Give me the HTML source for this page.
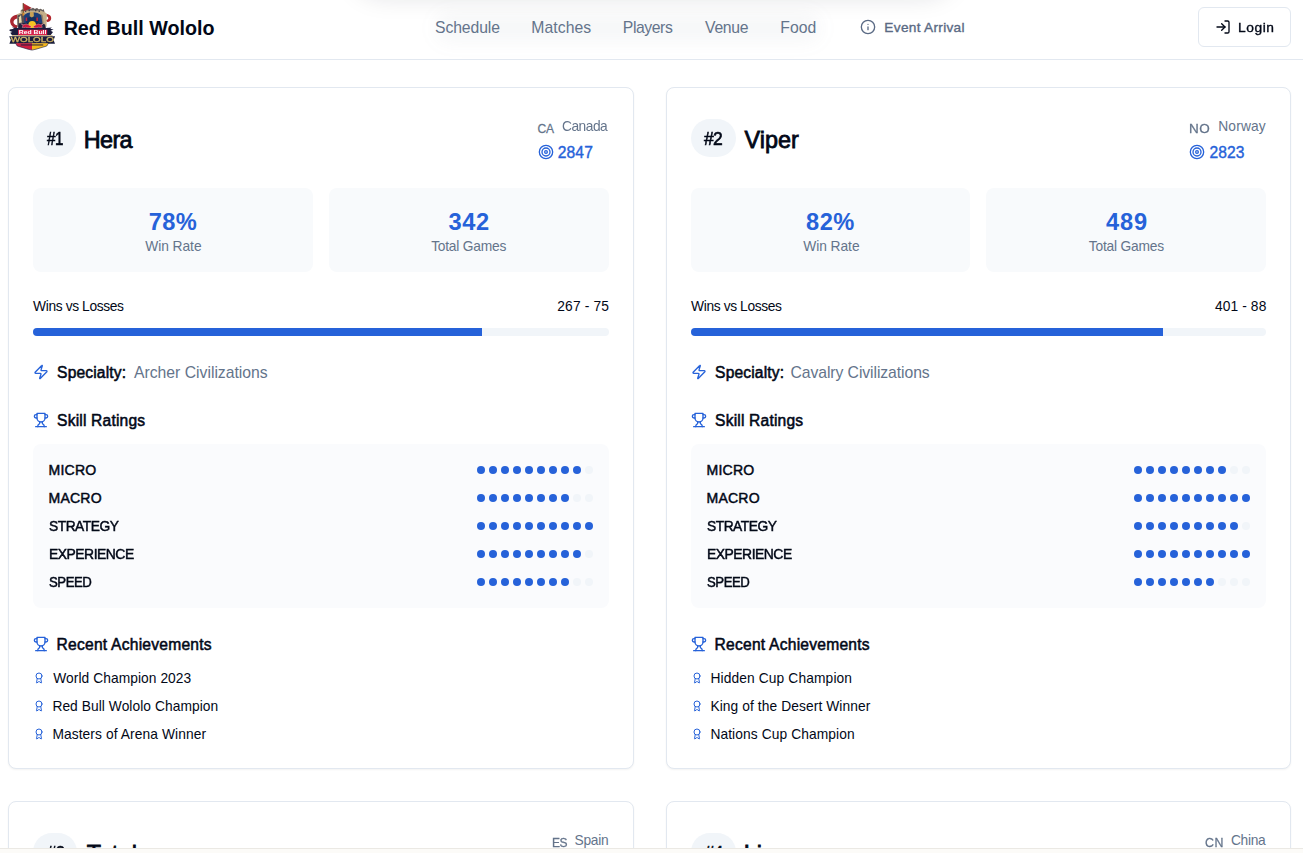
<!DOCTYPE html><html lang="en"><head><meta charset="utf-8"><title>Red Bull Wololo - Players</title><style>
*{box-sizing:border-box}
html,body{margin:0;padding:0}
body{width:1303px;height:853px;overflow:hidden;position:relative;background:#fff;font-family:"Liberation Sans",Arial,sans-serif;color:#020817}
.t{position:absolute;white-space:pre;line-height:normal;transform-origin:0 50%}
.b,.ic,.dots,.card{position:absolute}
.ic{display:block}
.logo{position:absolute;left:0;top:0;display:block}
header{position:absolute;left:0;top:0;width:1303px;height:60px;border-bottom:1px solid #e2e8f0;background:#fff}
.glow{position:absolute;left:362px;top:-52px;width:584px;height:40px;border-radius:20px;box-shadow:0 0 26px 8px rgba(15,23,42,.13)}
.navglow{position:absolute;left:436px;top:14px;width:384px;height:28px;border-radius:14px;background:rgba(100,116,139,.06);filter:blur(9px)}
.login{position:absolute;left:1198px;top:7px;width:93px;height:40px;border:1px solid #e2e8f0;border-radius:6px;background:#fff}
.card{border:1px solid #e2e8f0;border-radius:8px;background:#fff;box-shadow:0 1px 2px rgba(0,0,0,.05);box-sizing:content-box}
.bar{background:#f1f5f9;border-radius:4px;overflow:hidden}
.dots{display:flex;gap:4px}
.d{display:block;width:8px;height:8px;border-radius:50%;background:#f1f5f9}
.d.on{background:#2662d9}
.strip{position:absolute;left:0;top:848px;width:1303px;height:5px;background:#fcfbf8;border-top:1px solid #ebe9e4}
</style></head><body>
<header><div class="glow"></div><div class="navglow"></div>
<svg class="logo" width="64" height="56" viewBox="0 0 64 56" role="img" aria-label="Red Bull Wololo logo">
<defs>
<linearGradient id="lgFlag" x1="0" y1="0" x2="1" y2="1"><stop offset="0" stop-color="#cf323c"/><stop offset="1" stop-color="#8a1820"/></linearGradient>
<linearGradient id="lgGold" x1="0" y1="0" x2="0" y2="1"><stop offset="0" stop-color="#f6e8ac"/><stop offset=".5" stop-color="#cfae55"/><stop offset="1" stop-color="#8f7430"/></linearGradient>
<filter id="lgSoft" x="-10%" y="-10%" width="120%" height="120%"><feGaussianBlur stdDeviation=".32"/></filter>
</defs>
<g filter="url(#lgSoft)">
<!-- ribbons -->
<path d="M18.400 14.500C12.800 14.600 9.600 18.200 10.200 22.300c.5 3.300 2.800 5.600 6.500 6.100l1.100-3.200c-2.500.2-4.100-1-4.300-2.900-.2-2.100 1.500-3.800 4.700-3.900z" fill="#a92630"/>
<path d="M45.600 13.800c3.600.2 5.800 2.100 5.600 4.600-.2 2.100-1.700 3.400-4 3.500l-1.500-1.700c1.700-.2 2.600-.9 2.600-2.100s-1.100-2-3-2.200z" fill="#b3262e"/>
<!-- castle / tan shield -->
<path d="M20.600 12.800v-2.600l1.600-.9 1.500.9 1.400-1.400 2 .8 1.700-1.500 2.100 1 2-1.400 2 1.300 2.100-1 1.800 1.400 2-.7 1.500 1.300 1.500-.7.800 2.800 2.300 1.700-.4 12.900H17.400l-.4-12.400z" fill="#c4ae88"/>
<path d="M20.600 11.400l1.600-2.100 1.500.9 1.400-1.400 2 .8 1.700-1.500 2.100 1 2-1.400 2 1.300 2.100-1 1.800 1.400 2-.7 1.500 1.300 1.500-.7.500 2.600-3.700-1.400H24.500z" fill="#3b3a4c" opacity=".7"/>
<path d="M17.400 15.500l6.600-2.500 1 10.500-2.500 4H17.600z" fill="#2b2a3f" opacity=".72"/>
<path d="M40.400 13.400l2.400 1.800.8 8-2.600 1z" fill="#7d6a55" opacity=".6"/>
<path d="M25 10.400h1.300v1.500H25zM28.600 9.800h1.300v1.500h-1.300zM35 9.800h1.300v1.500H35zM38.600 10.400h1.300v1.500h-1.300z" fill="#2b2a3f" opacity=".8"/>
<!-- flag -->
<path d="M22.900 2.900 31.800 7.900 23.800 11.200z" fill="url(#lgFlag)"/>
<rect x="22.700" y="3.200" width="1" height="12" fill="#5e4326"/>
<!-- blue centre -->
<path d="M24 15.200c1.800-2 4.600-3 8.300-3 3.800 0 6.900 1 8.900 3l1.200 7.800H24.200z" fill="#1f3d77"/>
<path d="M26.500 18.500c1.600-1.200 3.400-1.800 5.700-1.800 2.400 0 4.400.6 6 1.800l.6 4.500H26.200z" fill="#172f5c"/>
<path d="M30 12h3.600l.3 4.200-2.100 1.200-2.100-1.200z" fill="#c9a257"/>
<path d="M19 17.200l2-2.200.8 7.400-2.900.6z" fill="#e8d9a8"/>
<path d="M22.600 12.800l1.800.2-.2 2.400-1.800.4z" fill="#d98a2b"/>
<rect x="25.700" y="17.600" width="1.500" height="3.400" fill="#c8283a"/><rect x="36.400" y="17.600" width="1.500" height="3.400" fill="#c8283a"/>
<!-- navy behind bulls -->
<path d="M19 24.500l3-1.500h19.600l3.400 1.500 1 4H18z" fill="#20223f"/>
<!-- sun and bulls -->
<circle cx="32.200" cy="24.800" r="3.800" fill="#f6c320"/>
<path d="M21.200 23.700l2.600 1 2.400-.7 2.500.9 2.500 1.400-.5 1.500-2.700.1-2.300-.6-2.400.5-1.300-.6 1.100-1.300z" fill="#d0173c" stroke="#f3dfe3" stroke-width=".35"/>
<path d="M43.300 23.700l-2.600 1-2.400-.7-2.500.9-2.500 1.400.5 1.500 2.700.1 2.300-.6 2.400.5 1.300-.6-1.100-1.300z" fill="#d0173c" stroke="#f3dfe3" stroke-width=".35"/>
<!-- navy spiky band -->
<path d="M9.800 29.400l4.200-.6-2-1.200 6.400.4h27.600l6-.6-1.800 1.400 3.400.7-3 1.300 2.400 1.200-2.600 3.400H12.200l-2-2.600 2.200-.9-3-1.100z" fill="#1c1f3d"/>
<!-- tan band -->
<path d="M11.600 35.100h41.200l-.8 1.400H12.600z" fill="#cdb88f"/>
<rect x="18" y="29.700" width="29.200" height="5.400" fill="#d6224d"/>
<text x="32.600" y="34.300" text-anchor="middle" font-family="Liberation Sans, Arial, sans-serif" font-weight="700" font-size="5.400" textLength="27.600" lengthAdjust="spacingAndGlyphs" fill="#ffffff">Red Bull</text>
<!-- wololo plate -->
<path d="M9.200 36.200h45.900l-1.500 3.700 1.400 3.800H9.400l1.400-3.800z" fill="#1c1f3d"/>
<text x="32.300" y="42.300" text-anchor="middle" font-family="Liberation Sans, Arial, sans-serif" font-weight="400" font-size="7.200" textLength="43" lengthAdjust="spacingAndGlyphs" fill="url(#lgGold)" stroke="#d9bd68" stroke-width=".28">WOLOLO</text>
<!-- bottom red / yellow -->
<path d="M15.600 43.200h16.400v6.900l-4-0.900-10.800-3.200z" fill="#cf1b40"/>
<path d="M32 43.200h16.400l-1.600 2.800-10.800 3.200-4 0.900z" fill="#f4b81c"/>
<path d="M15.600 43.200l1.600 2.800 10.800 3.200 4 .9 4-.9 10.800-3.200 1.600-2.800" fill="none" stroke="#1c1f3d" stroke-width=".6"/>
<rect x="20.800" y="44.300" width="22.400" height="1.300" fill="#2a2440" opacity=".8"/>
</g>
</svg>

<nav><span class="t" style="left:435.09px;top:19.00px;font-size:15.76px;color:#64748b;letter-spacing:-0.117px;">Schedule</span><span class="t" style="left:531.24px;top:19.00px;font-size:15.76px;color:#64748b;letter-spacing:0.078px;">Matches</span><span class="t" style="left:622.84px;top:19.00px;font-size:15.76px;color:#64748b;letter-spacing:-0.422px;">Players</span><span class="t" style="left:705.08px;top:19.00px;font-size:15.76px;color:#64748b;letter-spacing:-0.304px;">Venue</span><span class="t" style="left:780.24px;top:19.00px;font-size:15.76px;color:#64748b;letter-spacing:0.049px;">Food</span></nav>
<span class="t" style="left:63.64px;top:17.00px;font-size:19.7px;color:#020817;font-weight:700;letter-spacing:0.027px;">Red Bull Wololo</span>
<svg class="ic" style="left:860px;top:19px" width="16" height="16" viewBox="0 0 24 24" fill="none" stroke="#5a6a84" stroke-width="2" stroke-linecap="round" stroke-linejoin="round"><circle cx="12" cy="12" r="10"/><path d="M12 16v-4"/><path d="M12 8h.01"/></svg>
<span class="t" style="left:884.37px;top:20.20px;font-size:13.65px;color:#5a6a84;-webkit-text-stroke:0.36px currentColor;letter-spacing:0.301px;">Event Arrival</span>
<div class="login"></div>
<svg class="ic" style="left:1215px;top:19px" width="16" height="16" viewBox="0 0 24 24" fill="none" stroke="#020817" stroke-width="2" stroke-linecap="round" stroke-linejoin="round"><path d="M15 3h4a2 2 0 0 1 2 2v14a2 2 0 0 1-2 2h-4"/><polyline points="10 17 15 12 10 7"/><line x1="15" x2="3" y1="12" y2="12"/></svg>
<span class="t" style="left:1238.16px;top:20.10px;font-size:13.65px;color:#020817;-webkit-text-stroke:0.36px currentColor;letter-spacing:0.546px;transform:scaleX(1.0098);">Login</span>
</header><main>
<article class="player">
<div class="card" style="left:8px;top:87px;width:624px;height:680px"></div>
<div class="b" style="left:33px;top:119px;width:43px;height:38px;background:#f1f5f9;border-radius:19px"></div>
<div class="b" style="left:33px;top:188px;width:280px;height:84px;background:#f8fafc;border-radius:8px"></div>
<div class="b" style="left:329px;top:188px;width:280px;height:84px;background:#f8fafc;border-radius:8px"></div>
<div class="b bar" style="left:33px;top:328px;width:576px;height:8px"><div style="width:78%;height:8px;background:#2662d9"></div></div>
<div class="b" style="left:33px;top:444px;width:576px;height:164px;background:#fafbfd;border-radius:8px"></div>
<svg class="ic" style="left:538px;top:144px" width="16" height="16" viewBox="0 0 24 24" fill="none" stroke="#2662d9" stroke-width="2" stroke-linecap="round" stroke-linejoin="round"><circle cx="12" cy="12" r="10"/><circle cx="12" cy="12" r="6"/><circle cx="12" cy="12" r="2"/></svg>
<svg class="ic" style="left:33px;top:364px" width="16" height="16" viewBox="0 0 24 24" fill="none" stroke="#2662d9" stroke-width="2" stroke-linecap="round" stroke-linejoin="round"><path d="M4 14a1 1 0 0 1-.78-1.63l9.9-10.2a.5.5 0 0 1 .86.46l-1.92 6.02A1 1 0 0 0 13 10h7a1 1 0 0 1 .78 1.63l-9.9 10.2a.5.5 0 0 1-.86-.46l1.92-6.02A1 1 0 0 0 11 14z"/></svg>
<svg class="ic" style="left:33px;top:412px" width="16" height="16" viewBox="0 0 24 24" fill="none" stroke="#2662d9" stroke-width="2" stroke-linecap="round" stroke-linejoin="round"><path d="M6 9H4.5a2.5 2.5 0 0 1 0-5H6"/><path d="M18 9h1.5a2.5 2.5 0 0 0 0-5H18"/><path d="M4 22h16"/><path d="M10 14.66V17c0 .55-.47.98-.97 1.21C7.85 18.75 7 20.24 7 22"/><path d="M14 14.66V17c0 .55.47.98.97 1.21C16.15 18.75 17 20.24 17 22"/><path d="M18 2H6v7a6 6 0 0 0 12 0V2Z"/></svg>
<svg class="ic" style="left:33px;top:636px" width="16" height="16" viewBox="0 0 24 24" fill="none" stroke="#2662d9" stroke-width="2" stroke-linecap="round" stroke-linejoin="round"><path d="M6 9H4.5a2.5 2.5 0 0 1 0-5H6"/><path d="M18 9h1.5a2.5 2.5 0 0 0 0-5H18"/><path d="M4 22h16"/><path d="M10 14.66V17c0 .55-.47.98-.97 1.21C7.85 18.75 7 20.24 7 22"/><path d="M14 14.66V17c0 .55.47.98.97 1.21C16.15 18.75 17 20.24 17 22"/><path d="M18 2H6v7a6 6 0 0 0 12 0V2Z"/></svg>
<svg class="ic" style="left:33px;top:672px" width="12" height="12" viewBox="0 0 24 24" fill="none" stroke="#2662d9" stroke-width="2" stroke-linecap="round" stroke-linejoin="round"><path d="m15.477 12.89 1.515 8.526a.5.5 0 0 1-.81.47l-3.58-2.687a1 1 0 0 0-1.197 0l-3.586 2.686a.5.5 0 0 1-.81-.469l1.514-8.526"/><circle cx="12" cy="8" r="6"/></svg>
<svg class="ic" style="left:33px;top:700px" width="12" height="12" viewBox="0 0 24 24" fill="none" stroke="#2662d9" stroke-width="2" stroke-linecap="round" stroke-linejoin="round"><path d="m15.477 12.89 1.515 8.526a.5.5 0 0 1-.81.47l-3.58-2.687a1 1 0 0 0-1.197 0l-3.586 2.686a.5.5 0 0 1-.81-.469l1.514-8.526"/><circle cx="12" cy="8" r="6"/></svg>
<svg class="ic" style="left:33px;top:728px" width="12" height="12" viewBox="0 0 24 24" fill="none" stroke="#2662d9" stroke-width="2" stroke-linecap="round" stroke-linejoin="round"><path d="m15.477 12.89 1.515 8.526a.5.5 0 0 1-.81.47l-3.58-2.687a1 1 0 0 0-1.197 0l-3.586 2.686a.5.5 0 0 1-.81-.469l1.514-8.526"/><circle cx="12" cy="8" r="6"/></svg>
<div class="dots" style="left:477px;top:466px"><i class="d on"></i><i class="d on"></i><i class="d on"></i><i class="d on"></i><i class="d on"></i><i class="d on"></i><i class="d on"></i><i class="d on"></i><i class="d on"></i><i class="d"></i></div><div class="dots" style="left:477px;top:494px"><i class="d on"></i><i class="d on"></i><i class="d on"></i><i class="d on"></i><i class="d on"></i><i class="d on"></i><i class="d on"></i><i class="d on"></i><i class="d"></i><i class="d"></i></div><div class="dots" style="left:477px;top:522px"><i class="d on"></i><i class="d on"></i><i class="d on"></i><i class="d on"></i><i class="d on"></i><i class="d on"></i><i class="d on"></i><i class="d on"></i><i class="d on"></i><i class="d on"></i></div><div class="dots" style="left:477px;top:550px"><i class="d on"></i><i class="d on"></i><i class="d on"></i><i class="d on"></i><i class="d on"></i><i class="d on"></i><i class="d on"></i><i class="d on"></i><i class="d on"></i><i class="d"></i></div><div class="dots" style="left:477px;top:578px"><i class="d on"></i><i class="d on"></i><i class="d on"></i><i class="d on"></i><i class="d on"></i><i class="d on"></i><i class="d on"></i><i class="d on"></i><i class="d"></i><i class="d"></i></div>
<span class="t" style="left:46.72px;top:128.70px;font-size:17.55px;color:#020817;-webkit-text-stroke:0.59px currentColor;letter-spacing:-0.614px;transform:scaleX(0.8660);">#1</span>
<span class="t" style="left:83.69px;top:126.90px;font-size:23.4px;color:#020817;-webkit-text-stroke:0.79px currentColor;letter-spacing:-0.600px;">Hera</span>
<span class="t" style="left:537.46px;top:121.80px;font-size:12.06px;color:#64748b;-webkit-text-stroke:0.26px currentColor;letter-spacing:-0.108px;">CA</span>
<span class="t" style="left:562.07px;top:118.80px;font-size:13.79px;color:#64748b;letter-spacing:-0.483px;transform:scaleX(0.9976);">Canada</span>
<span class="t" style="left:557.63px;top:144.00px;font-size:15.6px;color:#2662d9;-webkit-text-stroke:0.38px currentColor;letter-spacing:0.173px;">2847</span>
<span class="t" style="left:148.75px;top:208.50px;font-size:23.64px;color:#2662d9;font-weight:700;letter-spacing:0.375px;">78%</span>
<span class="t" style="left:145.21px;top:239.20px;font-size:13.79px;color:#64748b;letter-spacing:-0.048px;">Win Rate</span>
<span class="t" style="left:448.38px;top:208.50px;font-size:23.64px;color:#2662d9;font-weight:700;letter-spacing:0.704px;">342</span>
<span class="t" style="left:431.14px;top:239.20px;font-size:13.79px;color:#64748b;letter-spacing:-0.215px;">Total Games</span>
<span class="t" style="left:33.11px;top:298.50px;font-size:13.79px;color:#020817;letter-spacing:-0.381px;">Wins vs Losses</span>
<span class="t" style="left:557.31px;top:298.50px;font-size:13.79px;color:#020817;letter-spacing:0.147px;">267 - 75</span>
<span class="t" style="left:57.11px;top:363.80px;font-size:15.6px;color:#020817;-webkit-text-stroke:0.53px currentColor;letter-spacing:0.148px;">Specialty:</span>
<span class="t" style="left:134.01px;top:363.80px;font-size:15.76px;color:#64748b;letter-spacing:-0.011px;">Archer Civilizations</span>
<span class="t" style="left:57.11px;top:411.60px;font-size:15.6px;color:#020817;-webkit-text-stroke:0.53px currentColor;letter-spacing:0.177px;">Skill Ratings</span>
<span class="t" style="left:48.57px;top:461.70px;font-size:14.07px;color:#020817;-webkit-text-stroke:0.46px currentColor;letter-spacing:0.196px;">MICRO</span>
<span class="t" style="left:48.57px;top:489.70px;font-size:14.07px;color:#020817;-webkit-text-stroke:0.46px currentColor;letter-spacing:0.173px;">MACRO</span>
<span class="t" style="left:49.15px;top:517.70px;font-size:14.07px;color:#020817;-webkit-text-stroke:0.46px currentColor;letter-spacing:-0.492px;transform:scaleX(0.9797);">STRATEGY</span>
<span class="t" style="left:48.58px;top:545.70px;font-size:14.07px;color:#020817;-webkit-text-stroke:0.46px currentColor;letter-spacing:-0.492px;transform:scaleX(0.9878);">EXPERIENCE</span>
<span class="t" style="left:49.17px;top:573.70px;font-size:14.07px;color:#020817;-webkit-text-stroke:0.46px currentColor;letter-spacing:-0.492px;transform:scaleX(0.9378);">SPEED</span>
<span class="t" style="left:56.54px;top:636.00px;font-size:15.6px;color:#020817;-webkit-text-stroke:0.53px currentColor;letter-spacing:0.238px;">Recent Achievements</span>
<span class="t" style="left:53.31px;top:670.90px;font-size:13.79px;color:#020817;letter-spacing:0.059px;">World Champion 2023</span>
<span class="t" style="left:52.38px;top:698.90px;font-size:13.79px;color:#020817;letter-spacing:0.058px;">Red Bull Wololo Champion</span>
<span class="t" style="left:52.38px;top:726.90px;font-size:13.79px;color:#020817;letter-spacing:0.090px;">Masters of Arena Winner</span>
</article>
<article class="player">
<div class="card" style="left:666px;top:87px;width:623px;height:680px"></div>
<div class="b" style="left:691px;top:119px;width:45px;height:38px;background:#f1f5f9;border-radius:19px"></div>
<div class="b" style="left:691px;top:188px;width:279px;height:84px;background:#f8fafc;border-radius:8px"></div>
<div class="b" style="left:986px;top:188px;width:280px;height:84px;background:#f8fafc;border-radius:8px"></div>
<div class="b bar" style="left:691px;top:328px;width:575px;height:8px"><div style="width:82%;height:8px;background:#2662d9"></div></div>
<div class="b" style="left:691px;top:444px;width:575px;height:164px;background:#fafbfd;border-radius:8px"></div>
<svg class="ic" style="left:1189px;top:144px" width="16" height="16" viewBox="0 0 24 24" fill="none" stroke="#2662d9" stroke-width="2" stroke-linecap="round" stroke-linejoin="round"><circle cx="12" cy="12" r="10"/><circle cx="12" cy="12" r="6"/><circle cx="12" cy="12" r="2"/></svg>
<svg class="ic" style="left:691px;top:364px" width="16" height="16" viewBox="0 0 24 24" fill="none" stroke="#2662d9" stroke-width="2" stroke-linecap="round" stroke-linejoin="round"><path d="M4 14a1 1 0 0 1-.78-1.63l9.9-10.2a.5.5 0 0 1 .86.46l-1.92 6.02A1 1 0 0 0 13 10h7a1 1 0 0 1 .78 1.63l-9.9 10.2a.5.5 0 0 1-.86-.46l1.92-6.02A1 1 0 0 0 11 14z"/></svg>
<svg class="ic" style="left:691px;top:412px" width="16" height="16" viewBox="0 0 24 24" fill="none" stroke="#2662d9" stroke-width="2" stroke-linecap="round" stroke-linejoin="round"><path d="M6 9H4.5a2.5 2.5 0 0 1 0-5H6"/><path d="M18 9h1.5a2.5 2.5 0 0 0 0-5H18"/><path d="M4 22h16"/><path d="M10 14.66V17c0 .55-.47.98-.97 1.21C7.85 18.75 7 20.24 7 22"/><path d="M14 14.66V17c0 .55.47.98.97 1.21C16.15 18.75 17 20.24 17 22"/><path d="M18 2H6v7a6 6 0 0 0 12 0V2Z"/></svg>
<svg class="ic" style="left:691px;top:636px" width="16" height="16" viewBox="0 0 24 24" fill="none" stroke="#2662d9" stroke-width="2" stroke-linecap="round" stroke-linejoin="round"><path d="M6 9H4.5a2.5 2.5 0 0 1 0-5H6"/><path d="M18 9h1.5a2.5 2.5 0 0 0 0-5H18"/><path d="M4 22h16"/><path d="M10 14.66V17c0 .55-.47.98-.97 1.21C7.85 18.75 7 20.24 7 22"/><path d="M14 14.66V17c0 .55.47.98.97 1.21C16.15 18.75 17 20.24 17 22"/><path d="M18 2H6v7a6 6 0 0 0 12 0V2Z"/></svg>
<svg class="ic" style="left:691px;top:672px" width="12" height="12" viewBox="0 0 24 24" fill="none" stroke="#2662d9" stroke-width="2" stroke-linecap="round" stroke-linejoin="round"><path d="m15.477 12.89 1.515 8.526a.5.5 0 0 1-.81.47l-3.58-2.687a1 1 0 0 0-1.197 0l-3.586 2.686a.5.5 0 0 1-.81-.469l1.514-8.526"/><circle cx="12" cy="8" r="6"/></svg>
<svg class="ic" style="left:691px;top:700px" width="12" height="12" viewBox="0 0 24 24" fill="none" stroke="#2662d9" stroke-width="2" stroke-linecap="round" stroke-linejoin="round"><path d="m15.477 12.89 1.515 8.526a.5.5 0 0 1-.81.47l-3.58-2.687a1 1 0 0 0-1.197 0l-3.586 2.686a.5.5 0 0 1-.81-.469l1.514-8.526"/><circle cx="12" cy="8" r="6"/></svg>
<svg class="ic" style="left:691px;top:728px" width="12" height="12" viewBox="0 0 24 24" fill="none" stroke="#2662d9" stroke-width="2" stroke-linecap="round" stroke-linejoin="round"><path d="m15.477 12.89 1.515 8.526a.5.5 0 0 1-.81.47l-3.58-2.687a1 1 0 0 0-1.197 0l-3.586 2.686a.5.5 0 0 1-.81-.469l1.514-8.526"/><circle cx="12" cy="8" r="6"/></svg>
<div class="dots" style="left:1134px;top:466px"><i class="d on"></i><i class="d on"></i><i class="d on"></i><i class="d on"></i><i class="d on"></i><i class="d on"></i><i class="d on"></i><i class="d on"></i><i class="d"></i><i class="d"></i></div><div class="dots" style="left:1134px;top:494px"><i class="d on"></i><i class="d on"></i><i class="d on"></i><i class="d on"></i><i class="d on"></i><i class="d on"></i><i class="d on"></i><i class="d on"></i><i class="d on"></i><i class="d on"></i></div><div class="dots" style="left:1134px;top:522px"><i class="d on"></i><i class="d on"></i><i class="d on"></i><i class="d on"></i><i class="d on"></i><i class="d on"></i><i class="d on"></i><i class="d on"></i><i class="d on"></i><i class="d"></i></div><div class="dots" style="left:1134px;top:550px"><i class="d on"></i><i class="d on"></i><i class="d on"></i><i class="d on"></i><i class="d on"></i><i class="d on"></i><i class="d on"></i><i class="d on"></i><i class="d on"></i><i class="d on"></i></div><div class="dots" style="left:1134px;top:578px"><i class="d on"></i><i class="d on"></i><i class="d on"></i><i class="d on"></i><i class="d on"></i><i class="d on"></i><i class="d on"></i><i class="d"></i><i class="d"></i><i class="d"></i></div>
<span class="t" style="left:704.48px;top:128.70px;font-size:17.55px;color:#020817;-webkit-text-stroke:0.59px currentColor;letter-spacing:-0.614px;transform:scaleX(0.9980);">#2</span>
<span class="t" style="left:744.42px;top:126.90px;font-size:23.4px;color:#020817;-webkit-text-stroke:0.79px currentColor;letter-spacing:0.060px;">Viper</span>
<span class="t" style="left:1189.32px;top:121.80px;font-size:12.06px;color:#64748b;-webkit-text-stroke:0.26px currentColor;letter-spacing:0.482px;transform:scaleX(1.1201);">NO</span>
<span class="t" style="left:1218.28px;top:118.80px;font-size:13.79px;color:#64748b;letter-spacing:0.143px;">Norway</span>
<span class="t" style="left:1209.53px;top:144.00px;font-size:15.6px;color:#2662d9;-webkit-text-stroke:0.38px currentColor;letter-spacing:0.057px;">2823</span>
<span class="t" style="left:806.06px;top:208.50px;font-size:23.64px;color:#2662d9;font-weight:700;letter-spacing:0.521px;">82%</span>
<span class="t" style="left:803.21px;top:239.20px;font-size:13.79px;color:#64748b;letter-spacing:-0.048px;">Win Rate</span>
<span class="t" style="left:1105.89px;top:208.50px;font-size:23.64px;color:#2662d9;font-weight:700;letter-spacing:0.914px;">489</span>
<span class="t" style="left:1088.84px;top:239.20px;font-size:13.79px;color:#64748b;letter-spacing:-0.205px;">Total Games</span>
<span class="t" style="left:691.11px;top:298.50px;font-size:13.79px;color:#020817;letter-spacing:-0.381px;">Wins vs Losses</span>
<span class="t" style="left:1214.94px;top:298.50px;font-size:13.79px;color:#020817;letter-spacing:0.116px;">401 - 88</span>
<span class="t" style="left:715.11px;top:363.80px;font-size:15.6px;color:#020817;-webkit-text-stroke:0.53px currentColor;letter-spacing:0.148px;">Specialty:</span>
<span class="t" style="left:790.52px;top:363.80px;font-size:15.76px;color:#64748b;letter-spacing:-0.085px;">Cavalry Civilizations</span>
<span class="t" style="left:715.11px;top:411.60px;font-size:15.6px;color:#020817;-webkit-text-stroke:0.53px currentColor;letter-spacing:0.177px;">Skill Ratings</span>
<span class="t" style="left:706.57px;top:461.70px;font-size:14.07px;color:#020817;-webkit-text-stroke:0.46px currentColor;letter-spacing:0.196px;">MICRO</span>
<span class="t" style="left:706.57px;top:489.70px;font-size:14.07px;color:#020817;-webkit-text-stroke:0.46px currentColor;letter-spacing:0.173px;">MACRO</span>
<span class="t" style="left:707.15px;top:517.70px;font-size:14.07px;color:#020817;-webkit-text-stroke:0.46px currentColor;letter-spacing:-0.492px;transform:scaleX(0.9797);">STRATEGY</span>
<span class="t" style="left:706.58px;top:545.70px;font-size:14.07px;color:#020817;-webkit-text-stroke:0.46px currentColor;letter-spacing:-0.492px;transform:scaleX(0.9878);">EXPERIENCE</span>
<span class="t" style="left:707.17px;top:573.70px;font-size:14.07px;color:#020817;-webkit-text-stroke:0.46px currentColor;letter-spacing:-0.492px;transform:scaleX(0.9378);">SPEED</span>
<span class="t" style="left:714.54px;top:636.00px;font-size:15.6px;color:#020817;-webkit-text-stroke:0.53px currentColor;letter-spacing:0.238px;">Recent Achievements</span>
<span class="t" style="left:710.38px;top:670.90px;font-size:13.79px;color:#020817;letter-spacing:0.124px;">Hidden Cup Champion</span>
<span class="t" style="left:710.38px;top:698.90px;font-size:13.79px;color:#020817;letter-spacing:0.090px;">King of the Desert Winner</span>
<span class="t" style="left:710.38px;top:726.90px;font-size:13.79px;color:#020817;letter-spacing:0.092px;">Nations Cup Champion</span>
</article>
<article class="player"><div class="card" style="left:8px;top:801px;width:624px;height:200px"></div>
<div class="b" style="left:33px;top:833px;width:44px;height:38px;background:#f1f5f9;border-radius:19px"></div>
<span class="t" style="left:46.96px;top:842.70px;font-size:17.55px;color:#020817;-webkit-text-stroke:0.59px currentColor;letter-spacing:-0.614px;transform:scaleX(0.9504);">#3</span>
<span class="t" style="left:86.80px;top:840.90px;font-size:23.4px;color:#020817;-webkit-text-stroke:0.79px currentColor;letter-spacing:0.175px;">Tatoh</span>
<span class="t" style="left:551.63px;top:835.80px;font-size:12.06px;color:#64748b;-webkit-text-stroke:0.26px currentColor;letter-spacing:-0.422px;transform:scaleX(0.9971);">ES</span>
<span class="t" style="left:574.48px;top:832.80px;font-size:13.79px;color:#64748b;letter-spacing:-0.261px;">Spain</span>
</article><article class="player"><div class="card" style="left:666px;top:801px;width:623px;height:200px"></div>
<div class="b" style="left:691px;top:833px;width:45px;height:38px;background:#f1f5f9;border-radius:19px"></div>
<span class="t" style="left:704.48px;top:842.70px;font-size:17.55px;color:#020817;-webkit-text-stroke:0.59px currentColor;letter-spacing:-0.606px;">#4</span>
<span class="t" style="left:743.69px;top:840.90px;font-size:23.4px;color:#020817;-webkit-text-stroke:0.79px currentColor;letter-spacing:0.061px;">Liereyy</span>
<span class="t" style="left:1204.65px;top:835.80px;font-size:12.06px;color:#64748b;-webkit-text-stroke:0.26px currentColor;letter-spacing:0.482px;transform:scaleX(1.0282);">CN</span>
<span class="t" style="left:1230.97px;top:832.80px;font-size:13.79px;color:#64748b;letter-spacing:-0.325px;">China</span>
</article>
</main><div class="strip"></div></body></html>
